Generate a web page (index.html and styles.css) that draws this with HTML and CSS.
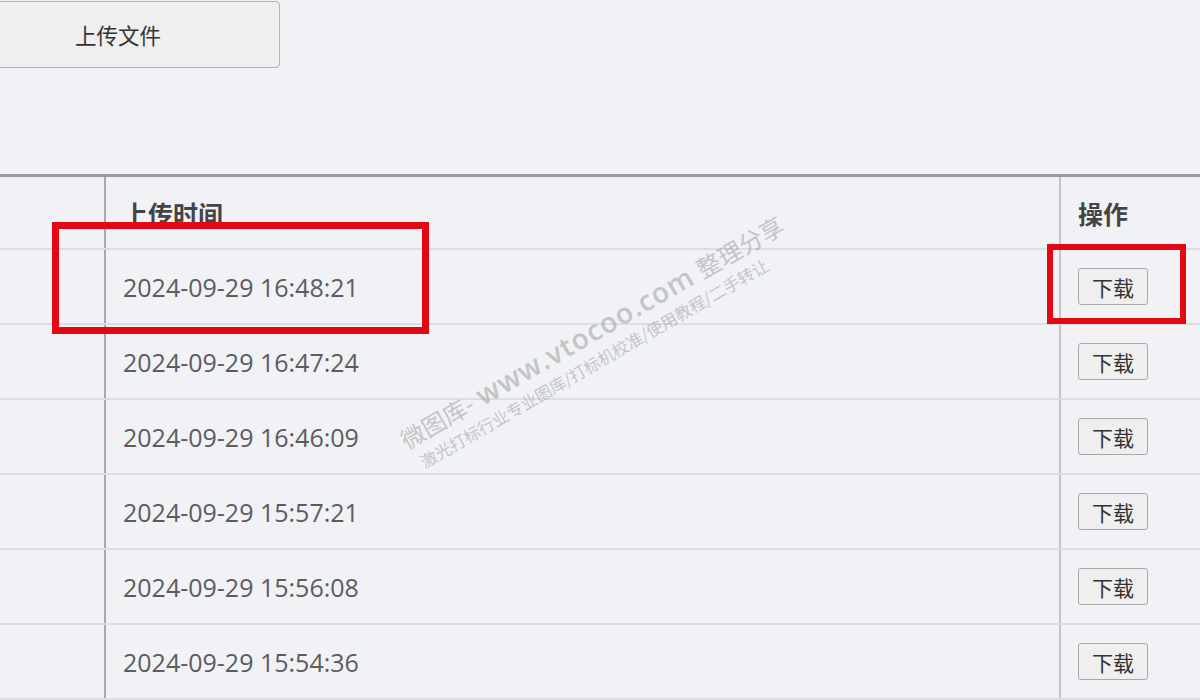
FILE: index.html
```html
<!DOCTYPE html>
<html lang="zh-CN">
<head>
    <meta charset="UTF-8">
    <meta name="viewport" content="width=device-width, initial-scale=1.0">
    <title>文件列表</title>
    <link rel="stylesheet" href="styles.css">
</head>
<body>
    <div class="page">
        <div class="toolbar">
            <button class="upload-btn">上传文件</button>
        </div>

        <table class="file-table">
            <colgroup>
                <col class="c-name">
                <col class="c-time">
                <col class="c-op">
            </colgroup>
            <tr>
                <th></th>
                <th>上传时间</th>
                <th>操作</th>
            </tr>
            <tr>
                <td></td>
                <td>2024-09-29 16:48:21</td>
                <td><button class="dl-btn">下载</button></td>
            </tr>
            <tr>
                <td></td>
                <td>2024-09-29 16:47:24</td>
                <td><button class="dl-btn">下载</button></td>
            </tr>
            <tr>
                <td></td>
                <td>2024-09-29 16:46:09</td>
                <td><button class="dl-btn">下载</button></td>
            </tr>
            <tr>
                <td></td>
                <td>2024-09-29 15:57:21</td>
                <td><button class="dl-btn">下载</button></td>
            </tr>
            <tr>
                <td></td>
                <td>2024-09-29 15:56:08</td>
                <td><button class="dl-btn">下载</button></td>
            </tr>
            <tr>
                <td></td>
                <td>2024-09-29 15:54:36</td>
                <td><button class="dl-btn">下载</button></td>
            </tr>
        </table>

        <!-- annotation boxes -->
        <div class="mark mark-time"></div>
        <div class="mark mark-dl"></div>

        <div class="watermark">
            <div class="wm-main"><span class="wm-small">微图库-</span> <b>www.vtocoo.com</b> <span class="wm-small">整理分享</span></div>
            <div class="wm-sub">激光打标行业专业图库/打标机校准/使用教程/二手转让</div>
        </div>
    </div>
</body>
</html>
```

FILE: styles.css
```css
body {
    margin: 0;
    background: #f0f2f5;
    font-family: "Open Sans", "Noto Sans CJK SC", sans-serif;
    color: #555;
}
.page {
    position: relative;
    width: 1200px;
    height: 700px;
    overflow: hidden;
}
.toolbar {
    height: 173px;
}
.upload-btn {
    display: block;
    margin-left: -14px;
    margin-top: 1px;
    width: 294px;
    height: 67px;
    background: #efefef;
    border: 1px solid #b4b4b4;
    border-radius: 4px;
    font-family: "Noto Sans CJK SC", sans-serif;
    font-size: 21.5px;
    color: #333;
    padding: 0 30px 0 0;
}
.file-table {
    width: 100%;
    table-layout: fixed;
    border-collapse: collapse;
    border-top: 3px solid #9a9a9a;
}
.c-name {
    width: 105px;
}
.c-op {
    width: 140px;
}
.file-table th {
    height: 71px;
    text-align: left;
    font-family: "Noto Sans CJK SC", sans-serif;
    font-size: 25px;
    font-weight: bold;
    color: #444;
    padding: 0 0 0 17px;
    border-bottom: 2px solid #dcdde0;
}
.file-table td {
    height: 73px;
    padding: 0 0 0 17px;
    font-size: 25px;
    color: #5c5c5c;
    border-bottom: 2px solid #dcdde0;
}
.file-table tr > :first-child {
    padding: 0;
    border-right: 2px solid #a9a9a9;
}
.file-table tr > :last-child {
    border-left: 2px solid #c4c4c4;
}
.dl-btn {
    width: 70px;
    height: 37px;
    background: #efefef;
    border: 1px solid #a8a8a8;
    border-radius: 3px;
    font-family: "Noto Sans CJK SC", sans-serif;
    font-size: 21px;
    color: #333;
    padding: 0;
}
.mark {
    position: absolute;
    border: 7px solid #e30613;
    box-sizing: border-box;
}
.mark-time {
    left: 52px;
    top: 222px;
    width: 377px;
    height: 112px;
}
.mark-dl {
    left: 1047px;
    top: 244px;
    width: 139px;
    height: 80px;
    border-width: 6px;
}
.watermark {
    position: absolute;
    left: 378px;
    top: 312px;
    width: 440px;
    transform: rotate(-30deg);
    transform-origin: center;
    color: rgba(150, 150, 150, 0.5);
    white-space: nowrap;
    pointer-events: none;
}
.wm-main {
    font-size: 28px;
    line-height: 34px;
}
.wm-main b {
    font-weight: 600;
    letter-spacing: 1px;
}
.wm-small {
    font-family: "Noto Sans CJK SC", sans-serif;
    font-size: 24px;
}
.wm-sub {
    font-family: "Noto Sans CJK SC", sans-serif;
    font-size: 16.5px;
    line-height: 22px;
    padding-left: 6px;
}
```
